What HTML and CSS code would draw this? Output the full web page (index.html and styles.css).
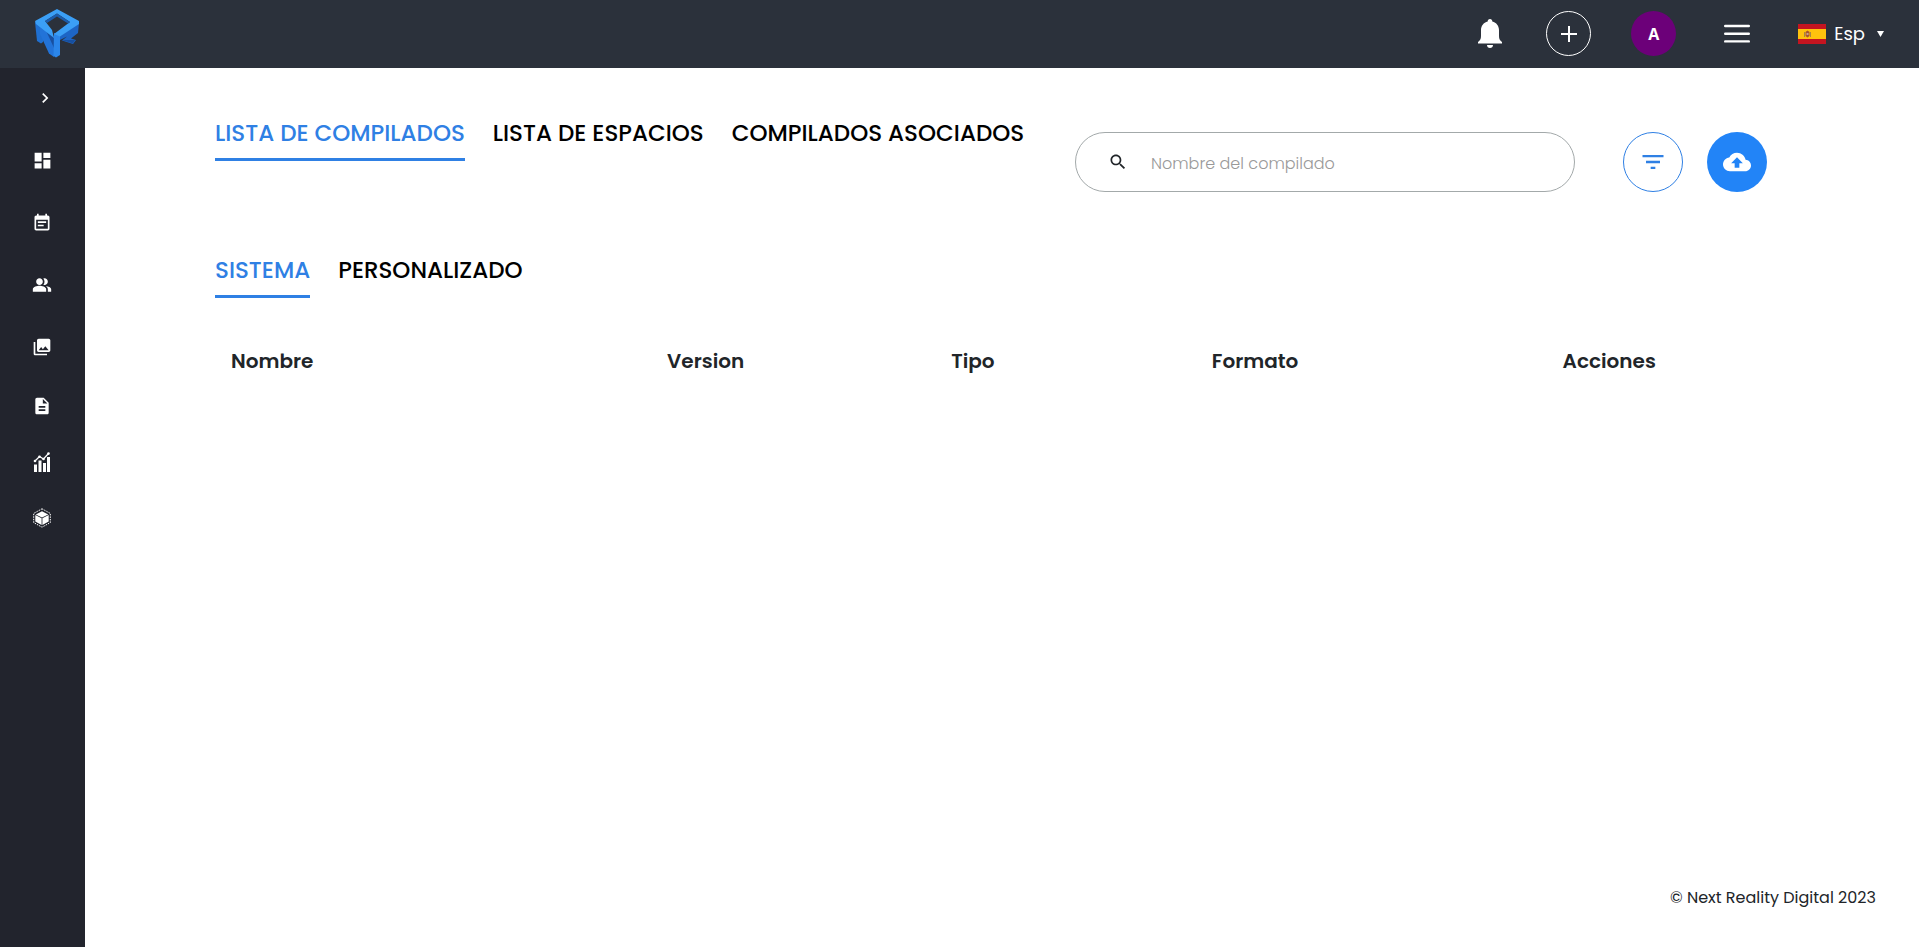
FILE: index.html
```html
<!DOCTYPE html>
<html lang="es">
<head>
<meta charset="utf-8">
<meta name="viewport" content="width=device-width, initial-scale=1">
<title>Lista de compilados</title>
<link rel="stylesheet" href="styles.css">
</head>
<body>
<header class="topbar">
  <a class="logo" href="#" aria-label="Next Reality Digital">
    <svg width="46" height="50" viewBox="34 8 46 50">
      <path d="M35 22 43 25V42L41 43.500 37 41Z" fill="#1f6fd0"/>
      <path d="M40 22 44 24 54 42V57L49 53.500 40 34Z" fill="#2273d8"/>
      <path d="M43 24 54 37V48Z" fill="#184f9f"/>
      <path d="M60 36 79 23 78 33 71 38.500 76 40 73 44 62 40.500 67 36.500 60 40Z" fill="#1d65c6"/>
      <path d="M62 40 75 40 73 43.500Z" fill="#174f9f"/>
      <path d="M54 33 60 35.500V55L56 57.500 53.500 56Z" fill="#2b86ea"/>
      <path d="M57 9 79 21V24L60 36.500 54 34 70 22 57 13.500 45 21 52 30 54 38 36 24 35 21Z" fill="#3b9ff6"/>
      <path d="M45 21 57 13.500 70 22 68 23.500 57 16.500 47 23Z" fill="#1c5cab"/>
    </svg>
  </a>
  <div class="actions">
    <button class="icon-btn bell" aria-label="Notificaciones">
      <svg width="24" height="30" viewBox="0 0 24 30"><path d="M12 0c1.500 0 2.300 1 2.300 2.500C18.500 3.500 21 7 21 11v6c0 3 .8 4.200 3 6v1.500H0V23c2.200-1.800 3-3 3-6v-6c0-4 2.500-7.500 6.700-8.500C9.700 1 10.500 0 12 0ZM9 26h6c0 2-1.300 3-3 3s-3-1-3-3Z" fill="#fff"/></svg>
    </button>
    <button class="icon-btn add" aria-label="Añadir">
      <svg width="16" height="16" viewBox="0 0 16 16"><path d="M8 0v16M0 8h16" stroke="#fff" stroke-width="2"/></svg>
    </button>
    <button class="icon-btn avatar">A</button>
    <button class="icon-btn menu" aria-label="Menú">
      <svg width="26" height="20" viewBox="0 0 26 20"><path d="M1.200 2h23.600M1.200 9.700h23.600M1.200 17.400h23.600" stroke="#fff" stroke-width="2.400" stroke-linecap="round"/></svg>
    </button>
    <button class="icon-btn language">
      <svg width="28" height="20" viewBox="0 0 28 20"><path fill="#c41420" d="M0 0h28v20H0z"/><path fill="#ffc20d" d="M0 5h28v10H0z"/><path d="M6.500 8v5M12.500 8v5" stroke="#a98545"/><path d="M7.500 8 9.500 6.500 11.500 8V12L9.500 13.500 7.500 12Z" fill="#a7562e"/><path d="M8.500 9h2v2h-2z" fill="#c9a08b"/></svg>
      <span>Esp</span>
      <svg class="caret" width="7" height="6" viewBox="0 0 7 6"><path d="M0 0h7L3.500 6Z" fill="#fff"/></svg>
    </button>
  </div>
</header>
<div class="shell">
  <nav class="sidebar" aria-label="Principal">
    <button class="nav-item expand" aria-label="Expandir"><svg width="20" height="20" viewBox="0 0 24 24"><path d="M10 6 8.600 7.400 13.200 12l-4.600 4.600L10 18l6-6z"/></svg></button>
    <a class="nav-item" href="#" aria-label="Panel"><svg width="21" height="21" viewBox="0 0 24 24"><path d="M3 13h8V3H3v10zm0 8h8v-6H3v6zm10 0h8V11h-8v10zm0-18v6h8V3h-8z"/></svg></a>
    <a class="nav-item" href="#" aria-label="Eventos"><svg width="20" height="20" viewBox="0 0 24 24"><path d="M17 10H7v2h10v-2zm2-7h-1V1h-2v2H8V1H6v2H5c-1.110 0-1.990.9-1.990 2L3 19c0 1.100.89 2 2 2h14c1.100 0 2-.9 2-2V5c0-1.100-.9-2-2-2zm0 16H5V8h14v11zm-5-5H7v2h7v-2z"/></svg></a>
    <a class="nav-item" href="#" aria-label="Usuarios"><svg width="20" height="20" viewBox="0 0 24 24"><path d="M16.670 13.130C18.040 14.060 19 15.320 19 17v3h4v-3c0-2.180-3.570-3.470-6.330-3.870zM15 12c2.210 0 4-1.790 4-4s-1.790-4-4-4c-.47 0-.91.1-1.330.24C14.500 5.270 15 6.580 15 8s-.5 2.730-1.330 3.760c.42.14.86.24 1.330.24zM9 12c2.210 0 4-1.790 4-4s-1.790-4-4-4-4 1.790-4 4 1.790 4 4 4zm0 1c-2.670 0-8 1.340-8 4v3h16v-3c0-2.660-5.330-4-8-4z"/></svg></a>
    <a class="nav-item" href="#" aria-label="Galería"><svg width="20" height="20" viewBox="0 0 24 24"><path d="M22 16V4c0-1.100-.9-2-2-2H8c-1.100 0-2 .9-2 2v12c0 1.100.9 2 2 2h12c1.100 0 2-.9 2-2zm-11-4 2.030 2.710L16 11l4 5H8l3-4zM2 6v14c0 1.100.9 2 2 2h14v-2H4V6H2z"/></svg></a>
    <a class="nav-item compact" href="#" aria-label="Documentos"><svg width="20" height="20" viewBox="0 0 24 24"><path d="M14 2H6c-1.100 0-2 .9-2 2v16c0 1.100.9 2 2 2h12c1.100 0 2-.9 2-2V8l-6-6zm2 16H8v-2h8v2zm0-4H8v-2h8v2zm-3-5V3.500L18.500 9H13z"/></svg></a>
    <a class="nav-item compact" href="#" aria-label="Estadísticas"><svg width="18" height="20" viewBox="0 0 18 20"><path d="M1 12.500h3V20H1zM5.500 8.500h3V20h-3zM10 11h3v9h-3zM14 5h3v15h-3z"/><path d="M1.500 9.500 6.500 4.500 10.500 7 15.500 1.500" fill="none" stroke="#fff" stroke-width="1.300"/><circle cx="2" cy="9" r="1.300"/><circle cx="6.500" cy="4.800" r="1.300"/><circle cx="10.500" cy="7" r="1.300"/><circle cx="15.500" cy="1.600" r="1.300"/></svg></a>
    <a class="nav-item compact" href="#" aria-label="Compilados"><svg width="20" height="20" viewBox="0 0 20 20"><path d="M10 .8 18.300 5.400V14.600L10 19.200 1.700 14.600V5.400Z" fill="none" stroke="#fff" stroke-dasharray="1.500 1"/><path d="M10 3.200 16.200 6.400 10 9.600 3.800 6.400ZM3.300 7.100 9.600 10.300V16.900L3.300 13.600ZM16.700 7.100 10.400 10.300V16.900L16.700 13.600Z"/></svg></a>
  </nav>
  <div class="page">
    <main class="content">
      <div class="toolbar">
        <nav class="tabs" aria-label="Listas">
          <a class="tab active" href="#">LISTA DE COMPILADOS</a>
          <a class="tab" href="#">LISTA DE ESPACIOS</a>
          <a class="tab" href="#">COMPILADOS ASOCIADOS</a>
        </nav>
        <div class="tools">
          <label class="search">
            <svg width="20" height="20" viewBox="0 0 24 24"><path d="M15.500 14h-.79l-.28-.27C15.410 12.590 16 11.110 16 9.500 16 5.910 13.090 3 9.500 3S3 5.910 3 9.500 5.910 16 9.500 16c1.610 0 3.090-.59 4.230-1.570l.27.28v.79l5 4.990L20.490 19l-4.990-5zm-6 0C7.010 14 5 11.990 5 9.500S7.010 5 9.500 5 14 7.010 14 9.500 11.990 14 9.500 14z" fill="#212529"/></svg>
            <input type="text" placeholder="Nombre del compilado" aria-label="Nombre del compilado">
          </label>
          <button class="round filter" aria-label="Filtrar"><svg width="28" height="28" viewBox="0 0 24 24"><path d="M10 18h4v-2h-4v2zM3 6v2h18V6H3zm3 7h12v-2H6v2z" fill="#2f80e4"/></svg></button>
          <button class="round upload" aria-label="Subir"><svg width="28" height="28" viewBox="0 0 24 24"><path d="M19.350 10.040C18.670 6.590 15.640 4 12 4 9.110 4 6.600 5.640 5.350 8.040 2.340 8.360 0 10.910 0 14c0 3.310 2.690 6 6 6h13c2.760 0 5-2.240 5-5 0-2.640-2.050-4.780-4.650-4.960zM14 13v4h-4v-4H7l5-5 5 5h-3z" fill="#fff"/></svg></button>
        </div>
      </div>
      <nav class="tabs" aria-label="Origen">
        <a class="tab active" href="#">SISTEMA</a>
        <a class="tab" href="#">PERSONALIZADO</a>
      </nav>
      <table class="builds">
        <thead>
          <tr><th class="name" scope="col">Nombre</th><th class="version" scope="col">Version</th><th class="type" scope="col">Tipo</th><th class="format" scope="col">Formato</th><th scope="col">Acciones</th></tr>
        </thead>
        <tbody></tbody>
      </table>
    </main>
    <footer class="footer">© Next Reality Digital 2023</footer>
  </div>
</div>
</body>
</html>
```
FILE: styles.css
```css
* { box-sizing: border-box; }

body {
  display: flex;
  flex-direction: column;
  min-height: 100vh;
  margin: 0;
  background: #fff;
  color: #212529;
  font-family: Poppins, Inter, sans-serif;
  font-size: 16px;
  line-height: 24px;
}

button, input { font: inherit; }
button { padding: 0; border: 0; background: none; cursor: pointer; }
a { color: inherit; text-decoration: none; }
svg { display: block; flex: none; }

.topbar {
  display: flex;
  align-items: center;
  justify-content: space-between;
  height: 68px;
  padding: 0 35px 1px 34px;
  background: #2b313b;
}
.logo { padding-bottom: 2px; }

.actions { display: flex; align-items: center; color: #fff; }
.icon-btn { display: flex; align-items: center; justify-content: center; color: #fff; }
.add, .avatar { width: 45px; height: 45px; border-radius: 50%; }
.add { margin-left: 44px; border: 1px solid #fff; }
.avatar { margin-left: 40px; background: #6c0079; font-family: "Open Sans", sans-serif; font-weight: 700; }
.menu { margin-left: 48px; }
.language { gap: 8px; margin-left: 48px; font-size: 18px; }
.caret { margin-left: 4px; }

.shell { display: flex; flex: 1; }

.sidebar {
  display: flex;
  flex-direction: column;
  flex: none;
  width: 85px;
  background: #22242d;
}
.nav-item { display: flex; align-items: center; justify-content: center; height: 62px; padding: 0 1px 1px 0; }
.nav-item svg { fill: #fff; }
.expand { padding: 0 0 2px 5px; }
.compact { height: 56px; }

.page { display: flex; flex-direction: column; flex: 1; }
.content { flex: 1; padding: 47px 152px 0 130px; }

.toolbar { display: flex; justify-content: space-between; gap: 28px; height: 137px; }
.tabs { display: flex; align-items: flex-start; gap: 28px; white-space: nowrap; }
.tab { padding: 0 0 10px; color: #000; font-size: 23px; font-weight: 500; line-height: 36px; }
.active { padding-bottom: 7px; border-bottom: 3px solid #2f80e4; color: #2f80e4; }

.tools { display: flex; align-items: flex-start; padding-top: 17px; }
.search {
  display: flex;
  align-items: center;
  gap: 23px;
  width: 500px;
  height: 60px;
  padding: 0 32px;
  border: 1px solid #a3a9aa;
  border-radius: 30px;
}
.search input { flex: 1; min-width: 0; padding: 3px 0 0; border: 0; outline: 0; background: none; font-weight: 300; }
.search input::placeholder { color: #999; opacity: 1; }
.round { display: flex; align-items: center; justify-content: center; width: 60px; height: 60px; border-radius: 50%; }
.filter { margin-left: 48px; border: 1px solid #2f80e4; }
.upload { margin-left: 24px; background: #2284f7; }

.builds { width: 100%; margin-top: 44px; border-collapse: collapse; table-layout: fixed; }
.builds th { padding: 4px 16px; font-size: 20px; font-weight: 600; line-height: 30px; text-align: left; }
.name { width: 28.1%; }
.version { width: 18.3%; }
.type { width: 16.8%; }
.format { width: 22.6%; }

.footer { padding: 0 43px 37px; text-align: right; }
```
